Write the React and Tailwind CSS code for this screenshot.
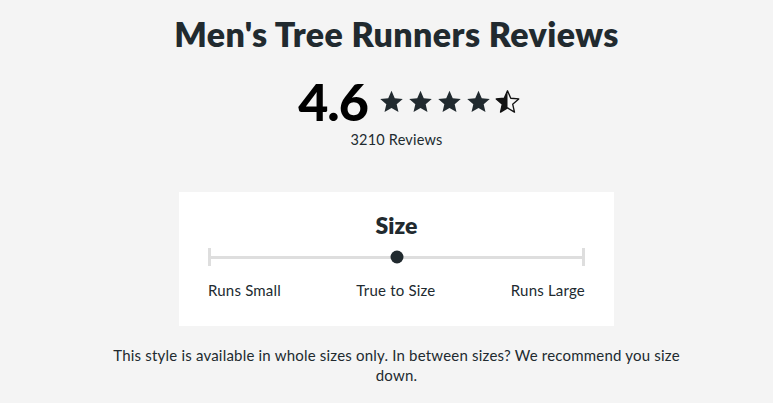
import React from 'react';

const STAR = 'M12 2.5l2.9 6.6 7.1.6-5.4 4.7 1.6 7-6.2-3.7-6.2 3.7 1.6-7L2 9.7l7.1-.6z';

const Star = ({ half = false }) => (
  <svg viewBox="0 0 24 24" className="w-[27px] h-[27px]">
    <defs>
      <clipPath id="halfClip">
        <rect x="0" y="0" width="12" height="24" />
      </clipPath>
    </defs>
    {half ? (
      <>
        <path d={STAR} fill="none" stroke="#111" strokeWidth="1.2" strokeLinejoin="round" />
        <path d={STAR} fill="#111" clipPath="url(#halfClip)" />
      </>
    ) : (
      <path d={STAR} fill="#212a2f" />
    )}
  </svg>
);

const App = () => {
  return (
    <div className="min-h-[403px] w-full bg-[#f4f4f4] text-[#212a2f] pl-[20px]" style={{ fontFamily: 'Lato, "Noto Sans", sans-serif' }}>
      <div className="flex flex-col items-center pt-[13px]">
        <h1 className="text-[34px] leading-[42px] font-extrabold tracking-[0.4px]">Men's Tree Runners Reviews</h1>

        {/* Rating */}
        <div className="flex items-center mt-[22px] ml-[26px] h-[48px]">
          <span className="text-[52px] leading-none font-black text-black tracking-[-1px]">4.6</span>
          <div className="flex items-center gap-[2px] ml-[10px]">
            <Star />
            <Star />
            <Star />
            <Star />
            <Star half />
          </div>
        </div>
        <p className="text-[14.5px] leading-[20px] mt-[5px] tracking-[0.2px]">3210 Reviews</p>

        {/* Size card */}
        <div className="bg-white w-[435px] h-[134px] mt-[42px] flex flex-col items-center pt-[19px] px-[29px]">
          <h2 className="text-[23px] leading-[28px] font-extrabold">Size</h2>
          <div className="relative w-full h-[18px] mt-[9px] flex items-center">
            <div className="w-[3px] h-[18px] bg-[#dedede]" />
            <div className="flex-1 h-[3px] bg-[#dedede]" />
            <div className="w-[3px] h-[18px] bg-[#dedede]" />
            <div className="absolute left-1/2 top-1/2 -translate-x-1/2 -translate-y-1/2 w-[13px] h-[13px] rounded-full bg-[#212a2f]" />
          </div>
          <div className="w-full flex justify-between text-[15px] leading-[20px] mt-[14px] tracking-[0.2px]">
            <span>Runs Small</span>
            <span>True to Size</span>
            <span>Runs Large</span>
          </div>
        </div>

        <p className="text-[15px] leading-[20px] text-center max-w-[590px] mt-[19px] tracking-[0.2px]">
          This style is available in whole sizes only. In between sizes? We recommend you size down.
        </p>
      </div>
    </div>
  );
};

export default App;
